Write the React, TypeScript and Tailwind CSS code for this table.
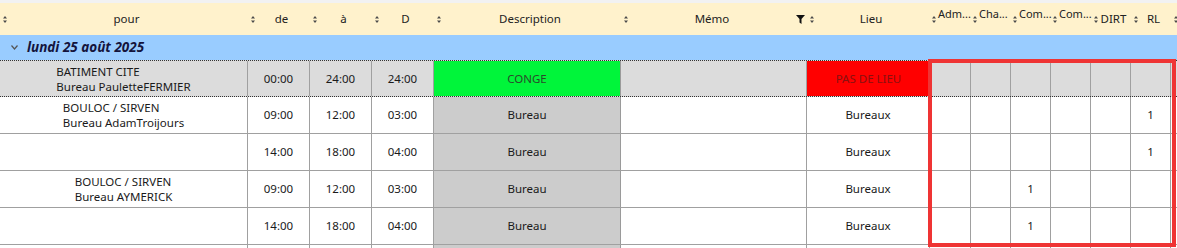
import React from 'react'

// column template shared by header and rows
const cols =
  'grid grid-cols-[248px_62px_62px_62px_187px_186px_123px_41px_40px_40px_40px_40px_40px_1fr]'

type Row = {
  who?: [string, string]
  de: string
  a: string
  d: string
  desc: string
  lieu: string
  counts: string[]
  selected?: boolean
}

const rows: Row[] = [
  {
    who: ['BATIMENT CITE', 'Bureau PauletteFERMIER'],
    de: '00:00',
    a: '24:00',
    d: '24:00',
    desc: 'CONGE',
    lieu: 'PAS DE LIEU',
    counts: ['', '', '', '', '', ''],
    selected: true,
  },
  {
    who: ['BOULOC / SIRVEN', 'Bureau AdamTroijours'],
    de: '09:00',
    a: '12:00',
    d: '03:00',
    desc: 'Bureau',
    lieu: 'Bureaux',
    counts: ['', '', '', '', '', '1'],
  },
  { de: '14:00', a: '18:00', d: '04:00', desc: 'Bureau', lieu: 'Bureaux', counts: ['', '', '', '', '', '1'] },
  {
    who: ['BOULOC / SIRVEN', 'Bureau AYMERICK'],
    de: '09:00',
    a: '12:00',
    d: '03:00',
    desc: 'Bureau',
    lieu: 'Bureaux',
    counts: ['', '', '1', '', '', ''],
  },
  { de: '14:00', a: '18:00', d: '04:00', desc: 'Bureau', lieu: 'Bureaux', counts: ['', '', '1', '', '', ''] },
  // next row, only its top edge shows
  { de: '', a: '', d: '', desc: '', lieu: '', counts: ['', '', '', '', '', ''] },
]

function SortIcon() {
  return (
    <svg width="4" height="7" viewBox="0 0 4 7" className="shrink-0 fill-[#4a4a4a]">
      <path d="M2 0L4 2.5H0z M0 4.5h4L2 7z" />
    </svg>
  )
}

function Funnel() {
  return (
    <svg width="9" height="9" viewBox="0 0 9 9" className="shrink-0 fill-[#111]">
      <path d="M0 0h9L5.5 4v5L3.5 7.5V4z" />
    </svg>
  )
}

function HeadCell({ label, small, filter }: { label: string; small?: boolean; filter?: boolean }) {
  if (small) {
    return (
      <div className="flex items-center h-full pl-[2px]">
        <SortIcon />
        <span className="self-start pt-[3px] pl-[2px] text-[11px] leading-[15px] whitespace-nowrap">
          {label}
        </span>
      </div>
    )
  }
  return (
    <div className="flex items-center h-full pl-[3px] pr-[2px] overflow-hidden">
      <SortIcon />
      <span className="flex-1 text-center whitespace-nowrap">{label}</span>
      {filter && <Funnel />}
    </div>
  )
}

function DataRow({ r }: { r: Row }) {
  const line = 'border-[#a0a0a0]'
  return (
    <div
      className={
        r.selected
          ? `${cols} h-[37px] bg-[#dcdcdc] border-y border-dotted border-y-[#333]`
          : `${cols} h-[37px] bg-white border-b border-[#a0a0a0]`
      }
    >
      <div className={`flex items-center justify-center border-r ${line}`}>
        {r.who && (
          <div className="text-left leading-[15px]">
            <div>{r.who[0]}</div>
            <div>{r.who[1]}</div>
          </div>
        )}
      </div>
      <div className={`flex items-center justify-center border-r ${line}`}>{r.de}</div>
      <div className={`flex items-center justify-center border-r ${line}`}>{r.a}</div>
      <div className={`flex items-center justify-center border-r ${line}`}>{r.d}</div>
      <div
        className={
          r.selected
            ? 'flex items-center justify-center border-r border-[#9a9a9a] bg-[#00f53a] text-[#2b4a2b]'
            : 'flex items-center justify-center border-r border-[#9a9a9a] bg-[#cccccc]'
        }
      >
        {r.desc}
      </div>
      <div className={`border-r ${line}`} />
      <div
        className={
          r.selected
            ? 'flex items-center justify-center bg-[#ff0000] text-[#8a1010]'
            : `flex items-center justify-center border-r ${line}`
        }
      >
        {r.lieu}
      </div>
      {r.counts.map((c, i) => (
        <div key={i} className={`flex items-center justify-center border-r ${line}`}>
          {c}
        </div>
      ))}
      <div />
    </div>
  )
}

export default function App() {
  return (
    <div className="relative w-[1177px] h-[248px] overflow-hidden bg-white font-['Noto_Sans',sans-serif] text-[11.5px] text-[#1a1a1a]">
      <div className="h-[3px] bg-[#f2f2f2]" />

      <div className={`${cols} h-[32px] bg-[#fff2cc] text-[#222]`}>
        <HeadCell label="pour" />
        <HeadCell label="de" />
        <HeadCell label="à" />
        <HeadCell label="D" />
        <HeadCell label="Description" />
        <HeadCell label="Mémo" filter />
        <HeadCell label="Lieu" />
        <HeadCell label="Adm..." small />
        <HeadCell label="Cha..." small />
        <HeadCell label="Com..." small />
        <HeadCell label="Com..." small />
        <HeadCell label="DIRT" />
        <HeadCell label="RL" />
        <div className="flex items-center pl-[3px]">
          <SortIcon />
        </div>
      </div>

      <div className="flex items-center h-[25px] bg-[#99ccff] pl-[11px] gap-[9px]">
        <svg width="7" height="5" viewBox="0 0 7 5" className="stroke-[#555] fill-none">
          <path d="M0.5 0.5L3.5 4L6.5 0.5" strokeWidth="1.2" />
        </svg>
        <span className="font-bold italic text-[13.5px] text-[#14143c]">lundi 25 août 2025</span>
      </div>

      {rows.map((r, i) => (
        <DataRow key={i} r={r} />
      ))}

      {/* red annotation frame drawn over the count columns */}
      <div className="absolute left-[928px] top-[59px] w-[248px] h-[188px] border-[4px] border-[#ef3434]" />
    </div>
  )
}
